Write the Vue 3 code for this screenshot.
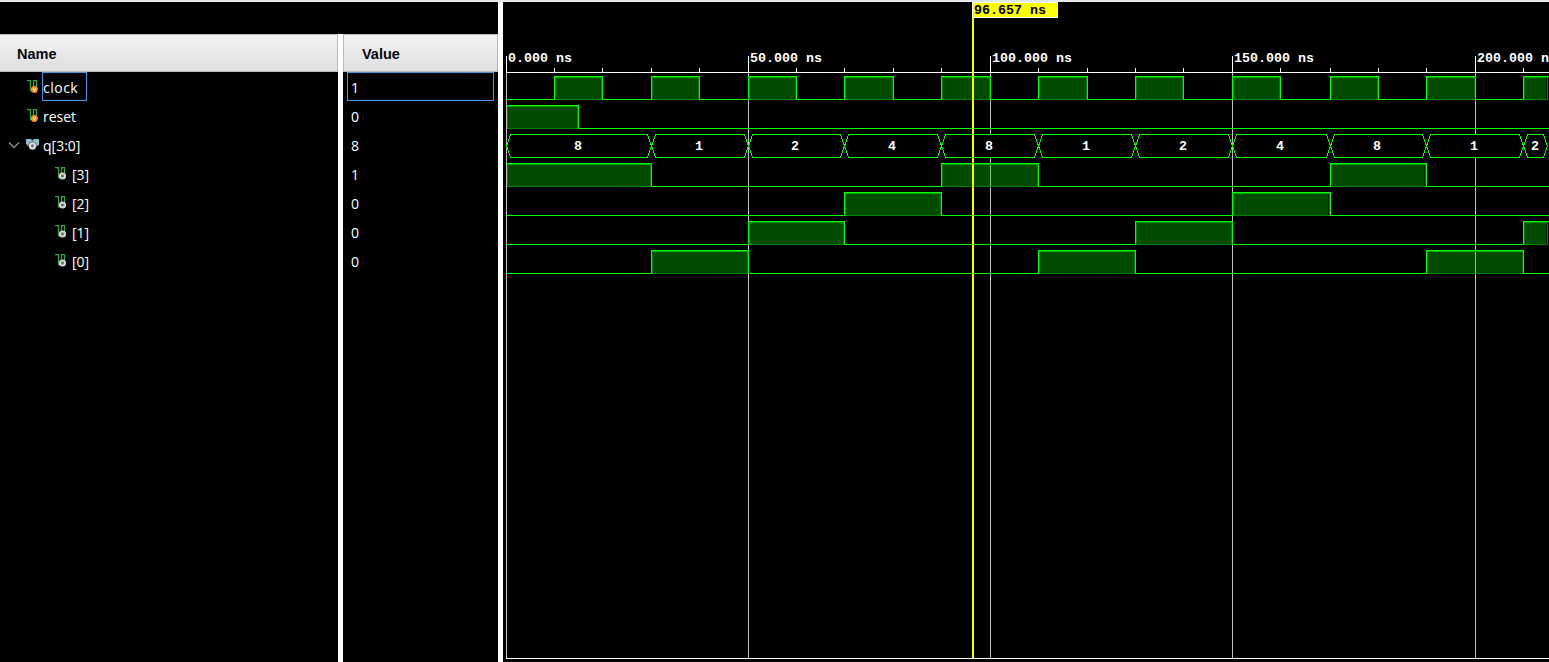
<script setup>
const edges = [506, 554, 602, 651, 699, 748, 796, 844, 893, 941, 990, 1038, 1087, 1135, 1183, 1232, 1280, 1330, 1378, 1426, 1475, 1523]
const END = 1547
const signals = [
  { name: 'clock', value: '1', kind: 'input', selected: true },
  { name: 'reset', value: '0', kind: 'input' },
  { name: 'q[3:0]', value: '8', kind: 'bus' },
  { name: '[3]', value: '1', kind: 'bit' },
  { name: '[2]', value: '0', kind: 'bit' },
  { name: '[1]', value: '0', kind: 'bit' },
  { name: '[0]', value: '0', kind: 'bit' }
]
const clockHigh = []
for (let i = 1; i < edges.length; i += 2) clockHigh.push([edges[i], edges[i + 1] ?? END])
// Pulses ending here leave a one-pixel gap before their inner edge.
const gapEnds = [1330, 1426, 1475, 1523, END]
const waves = [
  { top: 76, high: clockHigh },
  { top: 105, high: [[506, 578]] },
  { top: 163, high: [[506, 651], [941, 1038], [1330, 1426]] },
  { top: 192, high: [[844, 941], [1232, 1330]] },
  { top: 221, high: [[748, 844], [1135, 1232], [1523, END]] },
  { top: 250, high: [[651, 748], [1038, 1135], [1426, 1523]] }
].map(w => {
  const b = w.top + 23
  let d = ''
  let x = 506
  for (const [s, e] of w.high) {
    if (s > x) d += `M${x} ${b + 0.5}H${s + 0.5}`
    d += s === 506 ? `M506 ${w.top + 0.5}` : `M${s + 0.5} ${b + 1}V${w.top + 0.5}`
    d += e === END ? 'H1549' : `H${e + 0.5}V${b + 1}`
    x = e
  }
  if (x < END) d += `M${x} ${b + 0.5}H1549`
  const boxes = w.high.map(([s, e]) => ({
    x: s + 1,
    width: (e === END ? END + 1 : e) - s - 1,
    gap: gapEnds.includes(e)
  }))
  return { ...w, d, boxes }
})
const busEdges = [506, 651, 748, 844, 941, 1038, 1135, 1232, 1330, 1426, 1523, END]
const busValues = ['8', '1', '2', '4', '8', '1', '2', '4', '8', '1', '2']
const bus = busValues.map((v, i) => {
  const a = busEdges[i] + 0.5
  const b = busEdges[i + 1] + 0.5
  return {
    v,
    x: Math.floor((a + b) / 2) - (b - a < 30 ? 0 : 1),
    points: `${a},146 ${a + 4},134.5 ${b - 4},134.5 ${b},146 ${b - 4},157.5 ${a + 4},157.5`
  }
})
const majors = [
  { x: 506, t: '0.000 ns' }, { x: 748, t: '50.000 ns' }, { x: 990, t: '100.000 ns' },
  { x: 1232, t: '150.000 ns' }, { x: 1475, t: '200.000 ns' }
]
</script>

<template>
  <div class="viewer">
    <section class="names">
      <div class="spacer"></div>
      <header class="head">Name</header>
      <div v-for="s in signals" :key="s.name" class="row" :class="s.kind">
        <svg v-if="s.kind === 'bus'" class="chevron" width="12" height="8" viewBox="0 0 12 8"><path d="M1 1.5L6 6.5L11 1.5" fill="none" stroke="#8c8c8c" stroke-width="1.4" /></svg>
        <svg v-if="s.kind === 'bus'" class="icon" width="14" height="13" viewBox="0 0 14 13">
          <path d="M0 1H5L6.5 2.5L8 1H13V7L11 8H2L0 6Z" fill="#8fb9d0" />
          <circle cx="6.5" cy="7.8" r="4.2" fill="#4c5a62" />
          <circle cx="6.5" cy="7.8" r="2.6" fill="#777" stroke="#dcdcdc" stroke-width="2" />
        </svg>
        <svg v-else class="icon" width="14" height="13" viewBox="0 0 14 13">
          <path d="M0 .5H3.5V10.5H6.5V.5H9.5V7" fill="none" stroke="#35a34a" stroke-width="1.3" />
          <template v-if="s.kind === 'input'">
            <circle cx="7.4" cy="9.5" r="3.4" fill="#f39325" />
            <path d="M6.1 8L7.4 10.8L8.7 8" fill="none" stroke="#fff2d8" stroke-width=".9" />
          </template>
          <circle v-else cx="7.5" cy="9" r="2.5" fill="#666" stroke="#d4d4d4" stroke-width="2.1" />
        </svg>
        <span class="label" :class="{ selected: s.selected }">{{ s.name }}</span>
      </div>
    </section>
    <div class="divider short"></div>
    <section class="values">
      <div class="spacer"></div>
      <header class="head">Value</header>
      <div v-for="s in signals" :key="s.name" class="value" :class="{ selected: s.selected }">{{ s.value }}</div>
    </section>
    <div class="divider"></div>
    <svg class="plot" width="1046" height="660" viewBox="503 2 1046 660">
      <g shape-rendering="crispEdges">
        <path d="M506.5 73V658" stroke="#c0c0c0" />
        <path d="M506 658.5H1549M506 72.5H1549" stroke="#fff" />
        <rect v-for="x in edges" :key="x" :x="x" y="68" width="1" height="4" fill="#fff" />
        <g v-for="m in majors" :key="m.x">
          <rect :x="m.x" y="56" width="1" height="17" fill="#fff" />
          <rect :x="m.x" y="73" width="1" height="585" fill="#c0c0c0" />
        </g>
        <g v-for="w in waves" :key="w.top">
          <g v-for="b in w.boxes" :key="b.x">
            <rect :x="b.x" :y="w.top + 1" :width="b.width" height="22" fill="#004b00" />
            <rect v-if="b.gap" :x="b.x + b.width - 2" :y="w.top + 2" width="1" height="21" fill="#001400" />
            <rect :x="b.x + 0.5" :y="w.top + 1.5" :width="b.width - 1" height="22" fill="none" stroke="#008000" />
            <rect :x="b.x" :y="w.top + 1" :width="b.width" height="1" fill="#00a000" />
          </g>
          <path :d="w.d" fill="none" stroke="#0f0" />
        </g>
        <rect x="990" y="165" width="1" height="21" fill="#80c880" />
        <rect x="1475" y="252" width="1" height="21" fill="#80c880" />
        <polygon v-for="(b, i) in bus" :key="i" :points="b.points" fill="#000" />
        <polygon v-for="(b, i) in bus" :key="i" :points="b.points" fill="none" stroke="#0f0" />
        <rect x="972" y="2" width="2" height="656" fill="#ff0" />
        <rect x="972.5" y="2.5" width="85" height="15" fill="#ff0" stroke="#fff" />
      </g>
      <g class="mono">
        <text v-for="m in majors" :key="m.x" :x="m.x + 2" y="62">{{ m.t }}</text>
        <text v-for="(b, i) in bus" :key="i" :x="b.x" y="150" text-anchor="middle">{{ b.v }}</text>
        <text class="marker" x="974" y="14">96.657 ns</text>
      </g>
    </svg>
  </div>
</template>

<style>
body { margin: 0; background: #000; overflow: hidden; }
</style>

<style scoped>
.viewer {
  display: flex;
  box-sizing: border-box;
  width: 1549px;
  height: 662px;
  border-top: 2px solid #e6e7e9;
  background: #000;
  color: #fff;
  font: 14px/29px "Open Sans", "Noto Sans", sans-serif;
}
.names { width: 338px; }
.values { width: 155px; }
.spacer { height: 32px; }
.head {
  box-sizing: border-box;
  height: 38px;
  padding-left: 17px;
  border: 1px solid #b9b9bb;
  border-left: 0;
  background: linear-gradient(#f3f3f4, #dfdfe1);
  color: #05050f;
  font: bold 14.5px/38px "Liberation Sans", sans-serif;
}
.values .head { padding-left: 18px; border-left: 1px solid #b9b9bb; }
.divider { width: 5px; background: #fff; }
.divider.short { margin-top: 32px; }
.row { display: flex; align-items: center; height: 29px; padding-left: 27px; }
.row.bit { padding-left: 55px; }
.row.bus { padding-left: 8px; }
.chevron { margin-right: 6px; }
.icon { flex: none; }
.label { box-sizing: border-box; height: 29px; margin-left: 1px; padding: 0 8px 0 1px; border: 1px solid transparent; line-height: 29px; }
.input .label { padding-left: 0; }
.label.selected { letter-spacing: .5px; }
.label.selected, .value.selected { border-color: #4596dc; }
.value {
  box-sizing: border-box;
  height: 29px;
  margin: 0 4px;
  padding-left: 3px;
  border: 1px solid transparent;
  line-height: 29px;
}
.plot { display: block; flex: none; }
.mono { font: bold 13.33px "Liberation Mono", monospace; fill: #fff; white-space: pre; }
.mono .marker { fill: #000; }
</style>
